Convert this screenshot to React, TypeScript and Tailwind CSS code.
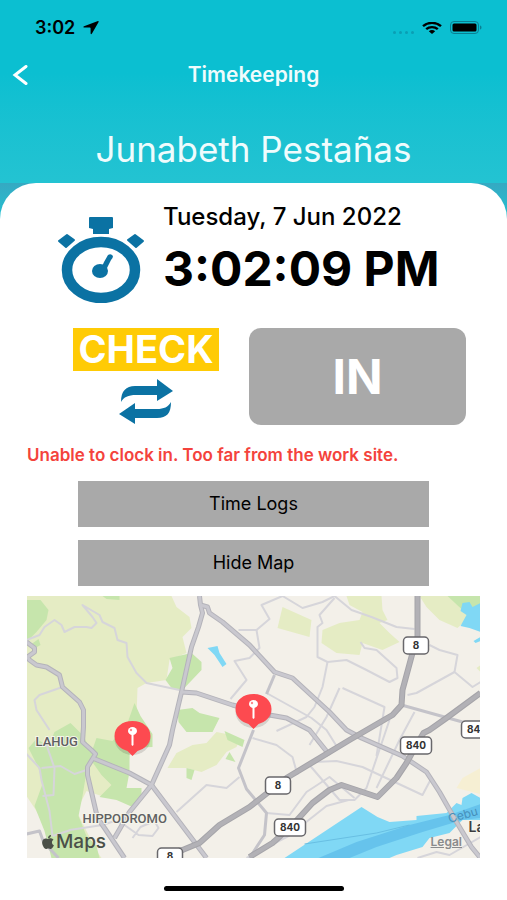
import { useState } from 'react';
import { FaApple } from 'react-icons/fa';

const lightGreens = [
    "0,0 145,0 150,11 163,21 165,32 156,41 160,57 143,64 140,84 120,87 111,92 110,121 103,130 103,160 100,190 90,203 75,200 60,195 50,215 60,235 70,255 75,262 25,262 20,235 10,215 0,200",
    "141,172 150,157 166,149 180,147 190,136 200,138 213,144 210,151 200,156 190,169 175,176 160,172",
    "256,11 285,24 283,41 251,32",
    "320,0 355,0 356,14 361,24 353,27 363,37 373,46 356,54 336,47 333,59 310,57 295,47 296,34 313,27 333,24 336,16 323,9",
    "393,0 423,0 436,14 443,21 431,32 413,24 400,11",
    "454,69 450,72 454,76",
];

const greens = [
    "0,4 14,4 22,14 20,24 10,36 0,46",
    "76,0 93,0 93,4 80,3",
    "5,48 12,43 14,49 7,53",
    "143,62 165,57 175,66 175,74 156,94 145,92 139,84 146,72",
    "151,114 166,112 173,117 193,122 186,136 160,136 152,126",
    "28,136 44,127 57,140 66,158 60,176 56,200 52,220 60,240 70,250 73,262 25,262 18,235 8,210 16,188 12,172 2,152 10,143 22,150",
    "63,162 70,142 86,145 100,130 108,107 114,120 126,138 126,151 103,152 103,176 100,192 115,192 115,202 106,211 90,204 73,201 85,189 75,179",
    "160,172 168,174 165,184 160,182",
    "198,135 218,144 216,151 201,144",
    "203,156 209,166 199,163",
    "421,0 454,0 454,12 436,14",
];

const water = [
    "181,52 191,50 193,57 200,68 196,71 188,59",
    "436,7 443,6 446,11 454,7 454,36 443,32 434,30 440,19 434,15",
    "454,41 447,45 449,47 454,45",
    "258,262 335,211 351,221 363,226 390,224 390,220 420,217 430,207 435,209 436,202 445,197 454,202 454,224 436,224 423,237 403,242 396,251 370,259 363,262",
];

const lanes = [
    "0,44 13,39 18,31 28,24 35,29 38,36 48,31 60,31 65,32 70,27 66,21 56,9 73,19 76,26 88,32 91,44 100,47 101,61 110,77 120,87 153,94",
    "36,91 13,99 8,104 10,114 23,134",
    "150,216 180,189 200,192 213,181",
    "43,234 76,229 88,225 98,229 112,239 126,240 132,232 128,225 114,231 106,242",
    "0,158 13,172 15,184 23,215 26,240",
    "20,149 28,172 27,199 16,200",
    "15,172 34,170 48,178 60,174",
    "26,240 44,234",
    "212,34 230,34 243,23 235,9 256,0 276,12 296,6 308,0 325,14 345,21 370,31 388,33",
    "230,34 233,52 223,62 208,65 220,84 204,103",
    "308,2 293,19 296,27 291,31 291,61 301,66 320,64 340,74 363,86 371,82 370,72 350,54 338,52 334,46",
    "301,66 296,91 288,111 280,121 250,135",
    "240,97 285,122 300,134 310,150",
    "403,49 413,54 431,59 428,76 446,91 454,86",
    "428,76 390,97 381,99",
    "313,92 305,110 300,121 283,149",
    "316,92 358,111 350,160",
    "226,142 250,149 266,161 271,179",
    "288,166 310,165 336,171 396,199 405,182",
    "283,169 313,204 328,204 340,192 363,124",
    "388,116 373,144 350,192",
    "240,217 263,219 280,196 303,181 328,202",
    "220,262 262,240 300,210 322,204",
    "391,262 410,256 423,259 454,241",
];

const streets = [
    "248,79 240,98",
    "227,134 212,172 220,193 240,217 238,239 223,262",
    "375,109 436,126 454,130",
    "0,238 13,235 17,246 32,262",
];

const roads = [
    "0,46 8,52 8,56 1,61 3,64 10,69 20,71 33,79 36,91 53,106 57,114 57,131 56,146 65,154 69,158 61,171 61,179 71,222 78,232 98,262",
    "174,9 181,11 183,17 196,26 223,49 248,76 266,82 303,116 320,134 335,142 376,160 400,176 413,196 430,226 445,251 454,262",
    "155,96 170,97 206,109 243,119 260,122 283,134 303,159",
    "66,162 103,177 125,189 180,262",
    "173,0 174,9 176,17 172,31 165,51 155,96 146,134 143,149 125,189 103,216 88,242",
];

const highways = [
    "391,0 391,41 386,57 376,94 375,109 366,119 323,144 260,182 223,211 193,229 173,247 156,254 143,257",
    "454,97 420,122 403,134 397,137 390,149 380,167 370,182 351,201 315,189 303,194 286,207 266,229 246,247 223,261",
];

const shields = [
    { x: 377, y: 41, width: 25, label: "8" },
    { x: 374, y: 141, width: 31, label: "840" },
    { x: 239, y: 181, width: 25, label: "8" },
    { x: 248, y: 223, width: 31, label: "840" },
    { x: 435, y: 125, width: 31, label: "840" },
    { x: 131, y: 252, width: 25, label: "8" },
];

const pins = [
    { x: 106, y: 141 },
    { x: 227, y: 114 },
];

const StatusBar = () => (
    <div className="flex items-center justify-between pl-[35px] pr-6 pt-3 h-11 text-black">
        <div className="flex items-center gap-2">
            <span className="text-lg font-semibold">3:02</span>
            <svg className="w-4 h-[14px]" viewBox="0 0 16 14" fill="currentColor">
                <path d="M15 0Q16 0 15.600 1L9 12.500Q8 14 7.600 12.500V7.500Q7.600 6.700 6.800 6.600L1 6.500Q-.5 6 1 5.200Z" />
            </svg>
        </div>
        <div className="flex items-center gap-2">
            <div className="flex gap-[3px] pt-2">
                <span className="w-[3px] h-[3px] rounded-full bg-[#0a9fb4]"></span>
                <span className="w-[3px] h-[3px] rounded-full bg-[#0a9fb4]"></span>
                <span className="w-[3px] h-[3px] rounded-full bg-[#0a9fb4]"></span>
                <span className="w-[3px] h-[3px] rounded-full bg-[#0a9fb4]"></span>
            </div>
            <svg className="w-5 h-3" viewBox="0 0 20 12" fill="none" stroke="currentColor" strokeWidth="2.4">
                <path d="M1 4.2C6 -.2 14 -.2 19 4.2" />
                <path d="M4.2 7.2C7.4 4.4 12.6 4.4 15.8 7.2" />
                <path d="M6.8 9.2C8.6 7.6 11.4 7.6 13.2 9.2L10 12Z" fill="currentColor" stroke="none" />
            </svg>
            <svg className="w-[33px] h-[14px]" viewBox="0 0 33 14">
                <rect x="0.5" y="0.5" width="28" height="12" rx="3.5" fill="none" stroke="#0a7f92" />
                <rect x="2.5" y="2.5" width="24" height="8" rx="1.5" fill="#000" />
                <path d="M30 4.5C32 5 32 8 30 8.500Z" fill="#0a7f92" />
            </svg>
        </div>
    </div>
);

const Stopwatch = () => (
    <svg className="w-[88px] h-[86px] shrink-0" viewBox="0 0 88 86" fill="#0b72a3">
        <path d="M33 0H55Q56 0 56 1V11L52 12V17H36V12L32 11V1Q32 0 33 0Z" />
        <path d="M2 24L10 18L17 23L9 30Z" stroke="#0b72a3" strokeWidth="2" strokeLinejoin="round" />
        <path d="M71 23L78 18L86 24L79 30Z" stroke="#0b72a3" strokeWidth="2" strokeLinejoin="round" />
        <ellipse cx="44" cy="53" rx="34" ry="28" fill="none" stroke="#0b72a3" strokeWidth="10.500" />
        <ellipse cx="43" cy="54" rx="8" ry="7" />
        <path d="M43 54L47 45L51 38Q54 36 56 39Q56 41 54 43L50 51L48 56Z" />
    </svg>
);

const SwapArrows = () => (
    <svg className="w-[54px] h-[46px]" viewBox="0 0 54 46" fill="#0b72a3">
        <path d="M2 23C2 12 7 7 16 7H38V0L54 12L38 22V16H17C9 16 5 18 2 23Z" />
        <path d="M52 23C52 34 48 39 38 39H16V45L0 35L16 24V30H38C45 30 49 28 52 23Z" />
    </svg>
);

const SiteMap = () => (
    <div className="relative h-[262px] overflow-hidden">
        <svg className="block w-full h-full" viewBox="0 0 454 262" preserveAspectRatio="xMidYMid slice">
            <rect width="454" height="262" fill="#f3f0e9" />
            <path d="M454 172L436 182L430 192L454 198Z" fill="#f6efd3" />
            {lightGreens.map((points) => <polygon key={points} points={points} fill="#e5ecc4" />)}
            {greens.map((points) => <polygon key={points} points={points} fill="#c6e5ac" />)}
            {water.map((points) => <polygon key={points} points={points} fill="#80d8f5" />)}
            <path d="M292 262L330 246L383 229L423 219L454 208V222L436 224L396 236L350 251L323 262Z" fill="#66c3ec" />
            <path d="M278 248L350 237L383 229" fill="none" stroke="#68bfe3" />

            <g fill="none" stroke="#d6d5da" strokeWidth="2" strokeLinejoin="round">
                {lanes.map((points) => <polyline key={points} points={points} />)}
            </g>
            <g fill="none" stroke="#c4c3c9" strokeWidth="3" strokeLinejoin="round">
                {streets.map((points) => <polyline key={points} points={points} />)}
            </g>
            <g fill="none" stroke="#b4b3ba" strokeWidth="5" strokeLinejoin="round">
                {roads.map((points) => <polyline key={points} points={points} />)}
            </g>
            <g fill="none" stroke="#c9c8cf" strokeWidth="3" strokeLinejoin="round">
                {roads.map((points) => <polyline key={points} points={points} />)}
            </g>
            <g fill="none" stroke="#a5a4a9" strokeWidth="6" strokeLinejoin="round">
                {highways.map((points) => <polyline key={points} points={points} />)}
            </g>
            <g fill="none" stroke="#b2b1b6" strokeWidth="4" strokeLinejoin="round">
                {highways.map((points) => <polyline key={points} points={points} />)}
            </g>

            {shields.map((shield) => (
                <g key={`${shield.x}-${shield.y}`}>
                    <rect x={shield.x} y={shield.y} width={shield.width} height="17" rx="4" fill="#fff" stroke="#68676b" strokeWidth="1.500" />
                    <text x={shield.x + shield.width / 2} y={shield.y + 12} textAnchor="middle" fill="#333" className="text-[10px] font-bold">{shield.label}</text>
                </g>
            ))}

            <g fill="#5f6062" stroke="#f5f5ea" strokeWidth="2" paintOrder="stroke" className="font-['Roboto',sans-serif] text-[13px] font-medium">
                <text x="9" y="150">LAHUG</text>
                <text x="56" y="227">HIPPODROMO</text>
            </g>
            <text x="423" y="227" transform="rotate(-16 423 227)" fill="#4690bb" className="text-xs">Cebu</text>
            <text x="442" y="236" fill="#3c3c3e" stroke="#f5f5ea" strokeWidth="2" paintOrder="stroke" className="text-sm font-semibold">La</text>

            {pins.map((pin) => (
                <g key={pin.x} transform={`translate(${pin.x} ${pin.y})`}>
                    <ellipse cx="0" cy="2" rx="18" ry="16" fill="#000" opacity="0.12" />
                    <path d="M-18 -1C-18 -10 -10 -16 0 -16S18 -10 18 -1C18 7 12 12 5 14L0 19L-5 14C-12 12 -18 7 -18 -1Z" fill="#fd4a50" />
                    <path d="M-1 -3H1V8L0 9L-1 8Z" fill="#fff" />
                    <ellipse cx="0" cy="-6" rx="4.500" ry="4" fill="#fff" />
                    <circle cx="-1.500" cy="-7" r="1.200" fill="#fd8a8e" />
                </g>
            ))}
        </svg>
        <div className="absolute left-[13px] bottom-1 flex items-center text-[#4b5048]">
            <FaApple className="w-4 h-4" />
            <span className="text-[19px] leading-6 font-medium">Maps</span>
        </div>
        <a href="#legal" className="absolute right-[18px] bottom-2 text-xs leading-4 font-semibold text-[#8a8b8c] underline">Legal</a>
    </div>
);

const App = () => {
    const [mapVisible, setMapVisible] = useState(true);

    return (
        <div className="min-h-screen bg-white font-['Inter','Liberation_Sans',sans-serif] text-black">
            <header className="bg-gradient-to-b from-[#0bbfd1] from-40% to-[#23c3d2] h-[183px]">
                <StatusBar />
                <div className="grid grid-cols-[40px_1fr_40px] items-center h-[62px]">
                    <button aria-label="Back" className="pl-3 text-white">
                        <svg className="w-4 h-5" viewBox="0 0 16 20" fill="none" stroke="currentColor" strokeWidth="3" strokeLinecap="round">
                            <path d="M14 1.500L3 10L14 18.500" />
                        </svg>
                    </button>
                    <h1 className="text-center text-[21px] font-semibold text-[#effcfd]">Timekeeping</h1>
                </div>
                <p className="pt-[19px] text-center text-[35px] leading-12 text-[#effcfd]">Junabeth Pestañas</p>
            </header>

            <div className="bg-gradient-to-b from-[#35a9c2] to-[#22bfd0] to-[32px]">
                <main className="bg-white rounded-t-[36px] px-[27px] pt-5">
                    <section className="flex gap-[18px] pl-[30px]">
                        <div className="pt-[14px]">
                            <Stopwatch />
                        </div>
                        <div>
                            <p className="text-2xl leading-7 font-medium">Tuesday, 7 Jun 2022</p>
                            <p className="pt-[14px] text-5xl leading-12 font-bold">3:02:09 PM</p>
                        </div>
                    </section>

                    <section className="flex gap-[30px] pl-[46px] pr-[14px] pt-[25px]">
                        <div className="flex flex-col items-center gap-2">
                            <div className="w-[146px] h-[43px] bg-[#ffcb05] text-center text-[38px] leading-[43px] font-bold text-white">CHECK</div>
                            <SwapArrows />
                        </div>
                        <button className="grow h-[97px] rounded-xl bg-[#a9a9a9] text-5xl font-bold text-white">IN</button>
                    </section>

                    <p className="pt-5 text-[17px] leading-5 font-semibold text-[#f4433c]">Unable to clock in. Too far from the work site.</p>

                    <div className="flex flex-col gap-[13px] px-[51px] pt-[16px] pb-[10px] text-lg">
                        <button className="h-[46px] bg-[#a9a9a9]">Time Logs</button>
                        <button className="h-[46px] bg-[#a9a9a9]" onClick={() => setMapVisible(!mapVisible)}>
                            {mapVisible ? "Hide Map" : "Show Map"}
                        </button>
                    </div>

                    {mapVisible && <SiteMap />}
                </main>
            </div>

            <div className="flex justify-center pt-7 pb-2">
                <div className="w-[180px] h-[5px] rounded-full bg-black"></div>
            </div>
        </div>
    );
};

export default App;
